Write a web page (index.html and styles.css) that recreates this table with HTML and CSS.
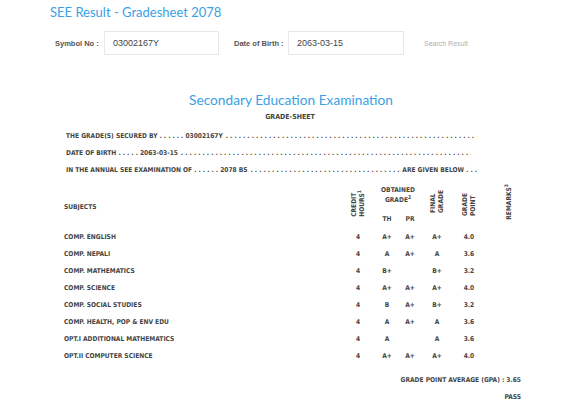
FILE: index.html
```html
<!DOCTYPE html>
<html>
<head>
<meta charset="utf-8">
<link rel="stylesheet" href="styles.css">
</head>
<body>
<div class="page">
  <h1 class="title">SEE Result - Gradesheet 2078</h1>
  <form class="search">
    <label class="lbl lbl-sym">Symbol No :</label>
    <div class="input in-sym">03002167Y</div>
    <label class="lbl lbl-dob">Date of Birth :</label>
    <div class="input in-dob">2063-03-15</div>
    <span class="btn">Search Result</span>
  </form>

  <div class="sheet">
    <h2 class="exam">Secondary Education Examination</h2>
    <div class="gs">GRADE-SHEET</div>

    <div class="line l1"><span>THE GRADE(S) SECURED BY . . . . . . 03002167Y</span><span class="dots"></span></div>
    <div class="line l2"><span>DATE OF BIRTH . . . . . 2063-03-15</span><span class="dots"></span></div>
    <div class="line l3"><span>IN THE ANNUAL SEE EXAMINATION OF . . . . . . 2078 BS</span><span class="dots"></span><span>ARE GIVEN BELOW . . .</span></div>

    <div class="grid head">
      <div class="h-sub">SUBJECTS</div>
      <div class="h-vert h-credit"><span class="vt">CREDIT<br>HOURS<sup>1</sup></span></div>
      <div class="h-obt">OBTAINED<br>GRADE<sup>2</sup></div>
      <div class="h-th">TH</div>
      <div class="h-pr">PR</div>
      <div class="h-vert h-final"><span class="vt">FINAL<br>GRADE</span></div>
      <div class="h-vert h-gp"><span class="vt">GRADE<br>POINT</span></div>
      <div class="h-vert h-rem"><span class="vt">REMARKS<sup>3</sup></span></div>
    </div>

    <div class="grid row"><div class="sub">COMP. ENGLISH</div><div>4</div><div>A+</div><div>A+</div><div>A+</div><div>4.0</div><div></div></div>
    <div class="grid row"><div class="sub">COMP. NEPALI</div><div>4</div><div>A</div><div>A+</div><div>A</div><div>3.6</div><div></div></div>
    <div class="grid row"><div class="sub">COMP. MATHEMATICS</div><div>4</div><div>B+</div><div></div><div>B+</div><div>3.2</div><div></div></div>
    <div class="grid row"><div class="sub">COMP. SCIENCE</div><div>4</div><div>A+</div><div>A+</div><div>A+</div><div>4.0</div><div></div></div>
    <div class="grid row"><div class="sub">COMP. SOCIAL STUDIES</div><div>4</div><div>B</div><div>A+</div><div>B+</div><div>3.2</div><div></div></div>
    <div class="grid row"><div class="sub">COMP. HEALTH, POP &amp; ENV EDU</div><div>4</div><div>A</div><div>A+</div><div>A</div><div>3.6</div><div></div></div>
    <div class="grid row"><div class="sub">OPT.I ADDITIONAL MATHEMATICS</div><div>4</div><div>A</div><div></div><div>A</div><div>3.6</div><div></div></div>
    <div class="grid row"><div class="sub">OPT.II COMPUTER SCIENCE</div><div>4</div><div>A+</div><div>A+</div><div>A+</div><div>4.0</div><div></div></div>

    <div class="gpa">GRADE POINT AVERAGE (GPA) : 3.65</div>
    <div class="pass">PASS</div>
  </div>
</div>
</body>
</html>
```

FILE: styles.css
```css
* { box-sizing: border-box; }
html, body { margin: 0; padding: 0; background: #fff; }
body { width: 580px; height: 403px; overflow: hidden; }

.page { padding-top: 3px; }

.title {
  margin: 0 0 0 50px;
  font-family: "Lato", "DejaVu Sans", sans-serif;
  font-weight: 400;
  font-size: 13px;
  line-height: 18px;
  color: #3a9fe6;
}

.search {
  display: flex;
  align-items: center;
  margin: 10px 0 0 55px;
  height: 24px;
  font-family: "Liberation Sans", Arial, sans-serif;
}
.lbl { font-size: 7.5px; font-weight: 700; color: #555; }
.lbl-sym { width: 49px; }
.lbl-dob { margin-left: 15px; width: 54px; }
.input {
  height: 24px;
  border: 1px solid #e8e8e8;
  font-size: 9px;
  color: #444;
  padding: 0 8px;
  display: flex;
  align-items: center;
}
.in-sym { width: 115px; }
.in-dob { width: 116px; }
.btn { margin-left: 20px; font-size: 7px; color: #b0b0b0; }

.sheet {
  font-family: "DejaVu Sans Condensed", "DejaVu Sans", sans-serif;
  font-weight: 700;
  color: #444;
  font-size: 6.6px;
}
.exam {
  margin: 37px 0 0 0;
  text-align: center;
  font-family: "Lato", "DejaVu Sans", sans-serif;
  font-weight: 400;
  font-size: 13.7px;
  line-height: 16px;
  color: #3a9fe6;
  padding-left: 2px;
}
.gs { text-align: center; margin-top: 5px; font-size: 7px; line-height: 9px; }

.line {
  display: flex;
  margin-left: 66px;
  white-space: nowrap;
  line-height: 17px;
  height: 17px;
}
.l1 { margin-top: 6px; width: 411px; }
.l2 { width: 405px; }
.l3 { width: 411px; }
.dots { flex: 1; overflow: hidden; padding-left: 3px; }
.dots::before {
  content: ". . . . . . . . . . . . . . . . . . . . . . . . . . . . . . . . . . . . . . . . . . . . . . . . . . . . . . . . . . . . . . . . . . . . . . . . . . . . . . . . . . .";
}
.l3 .dots { margin-right: 1px; }

.grid {
  display: grid;
  grid-template-columns: 280px 28px 30px 16px 38px 26px 54px;
  margin-left: 64px;
  text-align: center;
}
.head {
  margin-top: 6px;
  grid-template-rows: 24px 20px;
  height: 44px;
}
.h-sub { grid-column: 1; grid-row: 1 / 3; text-align: left; align-self: center; }
.h-vert { grid-row: 1 / 3; display: flex; justify-content: center; align-items: flex-end; }
.h-credit { grid-column: 2; padding-bottom: 12px; }
.h-final { grid-column: 5; padding-bottom: 16px; }
.h-gp { grid-column: 6; padding-bottom: 13px; }
.h-rem { grid-column: 7; padding-bottom: 9px; }
.vt {
  writing-mode: vertical-rl;
  transform: rotate(180deg);
  line-height: 8px;
  text-align: left;
}
.h-obt { grid-column: 3 / 5; grid-row: 1; line-height: 10px; padding-top: 0; padding-left: 6px; }
.h-th { grid-column: 3; grid-row: 2; align-self: center; }
.h-pr { grid-column: 4; grid-row: 2; align-self: center; }
sup { font-size: 5px; vertical-align: 3px; line-height: 0; }

.row { height: 17px; line-height: 17px; }
.row .sub { text-align: left; }

.gpa {
  text-align: right;
  width: 521px;
  margin-top: 7px;
  line-height: 17px;
}
.pass {
  text-align: right;
  width: 521px;
  line-height: 17px;
}
```
